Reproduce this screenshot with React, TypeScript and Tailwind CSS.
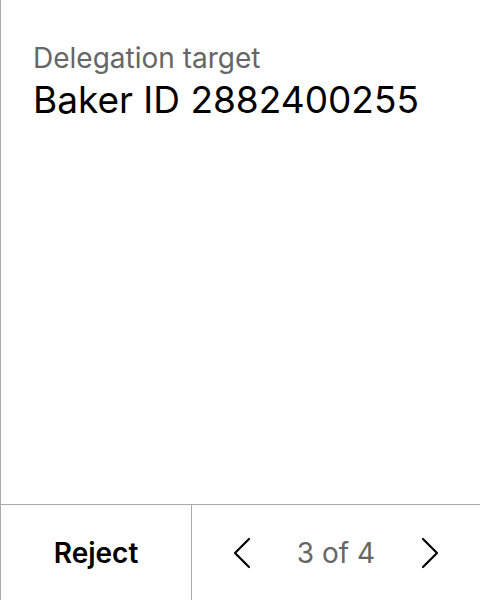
import React from 'react';

const Chevron = ({ dir }: { dir: 'left' | 'right' }) => (
  <svg width="20" height="32" viewBox="0 0 20 32" fill="none" stroke="#000" strokeWidth="2.2" strokeLinecap="round" strokeLinejoin="round">
    {dir === 'left' ? <path d="M17 2 L3 16 L17 30" /> : <path d="M3 2 L17 16 L3 30" />}
  </svg>
);

export default function App() {
  return (
    <div className="w-[480px] h-[600px] bg-white border-l border-[#aaaaaa] flex flex-col font-['Inter',sans-serif]">
      <div className="flex-1 pl-[32px] pt-[41px]">
        <div className="text-[28px] leading-[34px] text-[#666666]">Delegation target</div>
        <div className="text-[37px] leading-[44px] text-black mt-[3px]">Baker ID 2882400255</div>
      </div>
      <div className="h-[96px] border-t border-[#aaaaaa] flex">
        <button className="w-[191px] border-r border-[#aaaaaa] flex items-center justify-center text-[28px] font-semibold text-black">
          Reject
        </button>
        <div className="flex-1 flex items-center justify-center gap-[44px]">
          <Chevron dir="left" />
          <span className="text-[28px] text-[#666666] w-[80px] text-center">3 of 4</span>
          <Chevron dir="right" />
        </div>
      </div>
    </div>
  );
}
